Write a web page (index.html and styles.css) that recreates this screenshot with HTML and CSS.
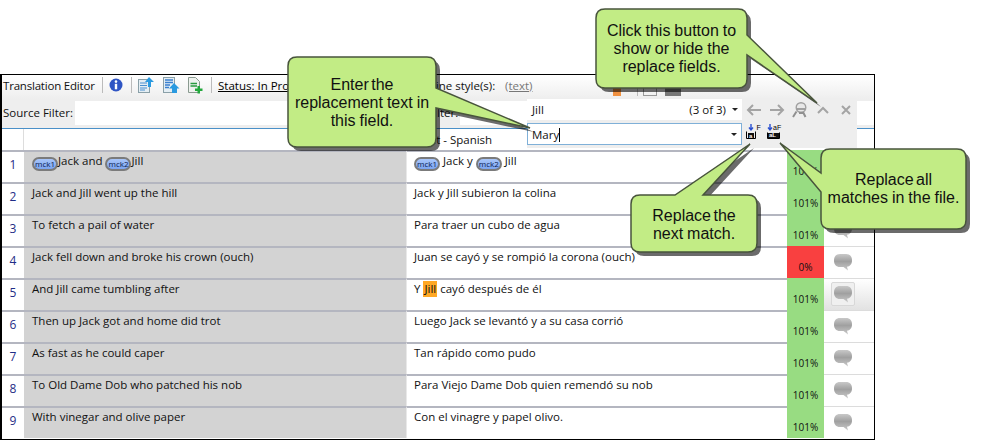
FILE: index.html
```html
<!DOCTYPE html>
<html lang="en">
<head>
  <meta charset="UTF-8" />
  <title>Translation Editor</title>
  <link rel="stylesheet" href="styles.css">
</head>
<body>

<svg class="defs" width="0" height="0" aria-hidden="true">
  <defs>
    <linearGradient id="bubbleFill" x1="0" y1="0" x2="0" y2="1">
      <stop offset="0" stop-color="#c8c8c8"/>
      <stop offset="0.45" stop-color="#a0a0a0"/>
      <stop offset="1" stop-color="#cacaca"/>
    </linearGradient>
    <symbol id="bubble" viewBox="0 0 18 17">
      <path d="M6 0H12C16 0 18 2.500 18 6.500C18 10 16 12.500 13 12.800L14 16.500L9.500 13H6C2 13 0 10.500 0 6.500C0 2.500 2 0 6 0Z" fill="url(#bubbleFill)"/>
    </symbol>
    <path id="c1" d="M297 57H427Q436 57 436 66V88L530 128L436 108V138Q436 147 427 147H297Q288 147 288 138V66Q288 57 297 57Z"/>
    <path id="c2" d="M605 9H738Q747 9 747 18V35L817 103L747 55V79Q747 88 738 88H605Q596 88 596 79V18Q596 9 605 9Z"/>
    <path id="c3" d="M640 195H675L750 144L703 195H748Q757 195 757 204V243Q757 252 748 252H640Q631 252 631 243V204Q631 195 640 195Z"/>
    <path id="c4" d="M830 149H957Q966 149 966 158V220Q966 229 957 229H830Q821 229 821 220V192L780 143L821 173V158Q821 149 830 149Z"/>
  </defs>
</svg>

<div class="window">
  <div class="toolbar">
    <span class="title">Translation Editor</span>
    <span class="sep"></span>
    <svg class="tool-info" width="14" height="14" viewBox="0 0 14 14">
      <circle cx="7" cy="7" r="6.500" fill="#2f55c4"/>
      <circle cx="7" cy="3.600" r="1.300" fill="#fff"/>
      <rect x="5.800" y="5.800" width="2.400" height="5.500" fill="#fff"/>
    </svg>
    <span class="sep"></span>
    <svg class="tool-icon" width="17" height="17" viewBox="0 0 17 17">
      <rect x="0.500" y="2.500" width="11" height="13" fill="#e4eef4" stroke="#8aa0a8"/>
      <path d="M2 6H9M2 8.500H9M2 11H9M2 13H7" stroke="#4a90d0"/>
      <path d="M11 0L16 5H13V10H10V5H7Z" fill="#2a9ae0"/>
    </svg>
    <svg class="tool-icon" width="17" height="17" viewBox="0 0 17 17">
      <rect x="0.500" y="0.500" width="11" height="15" fill="#e4eef4" stroke="#8aa0a8"/>
      <path d="M2 3H10M2 5.500H10M2 8H7M2 10.500H6" stroke="#3a80d0" stroke-width="1.500"/>
      <path d="M11 6L16.500 11.500H14V16H9V11.500H6Z" fill="#2a9ae0"/>
    </svg>
    <svg class="tool-icon" width="15" height="17" viewBox="0 0 15 17">
      <path d="M0.500 0.500H7.500L11.500 4.500V15.500H0.500Z" fill="#eef2ee" stroke="#8a9a90"/>
      <path d="M2.500 6.500H9M2.500 9H9" stroke="#2a9a40" stroke-width="1.500"/>
      <path d="M9.500 9H12V11.500H14.500V14H12V16.500H9.500V14H7V11.500H9.500Z" fill="#22a83c"/>
    </svg>
    <span class="sep"></span>
    <a class="status">Status: In Progress</a>
    <span class="style-label">Apply inline style(s):</span>
    <a class="style-link">(text)</a>
    <span class="hidden-tools">
      <i class="stub-orange"></i>
      <i class="stub-line"></i>
      <i class="stub-box"></i>
      <i class="stub-dark"></i>
    </span>
  </div>

  <div class="filters">
    <label class="filter-label">Source Filter:</label>
    <div class="filter-input source-input"></div>
    <label class="filter-label">Target Filter:</label>
    <div class="filter-input target-input"></div>
  </div>

  <div class="head">
    <div class="cell-num"></div>
    <div class="cell-source"></div>
    <div class="cell-target">Target - Spanish</div>
    <div class="head-rest"></div>
  </div>

  <div class="row">
    <div class="cell-num">1</div>
    <div class="cell-source"><span class="tag">mck1</span>Jack and <span class="tag">mck2</span>Jill</div>
    <div class="cell-target"><span class="tag">mck1</span> Jack y <span class="tag">mck2</span> Jill</div>
    <div class="cell-match">101%</div>
    <div class="cell-note"><svg class="bubble" width="18" height="17"><use href="#bubble"/></svg></div>
  </div>
  <div class="row">
    <div class="cell-num">2</div>
    <div class="cell-source">Jack and Jill went up the hill</div>
    <div class="cell-target">Jack y Jill subieron la colina</div>
    <div class="cell-match">101%</div>
    <div class="cell-note"><svg class="bubble" width="18" height="17"><use href="#bubble"/></svg></div>
  </div>
  <div class="row">
    <div class="cell-num">3</div>
    <div class="cell-source">To fetch a pail of water</div>
    <div class="cell-target">Para traer un cubo de agua</div>
    <div class="cell-match">101%</div>
    <div class="cell-note"><svg class="bubble" width="18" height="17"><use href="#bubble"/></svg></div>
  </div>
  <div class="row">
    <div class="cell-num">4</div>
    <div class="cell-source">Jack fell down and broke his crown (ouch)</div>
    <div class="cell-target">Juan se cayó y se rompió la corona (ouch)</div>
    <div class="cell-match no-match">0%</div>
    <div class="cell-note"><svg class="bubble" width="18" height="17"><use href="#bubble"/></svg></div>
  </div>
  <div class="row current">
    <div class="cell-num">5</div>
    <div class="cell-source">And Jill came tumbling after</div>
    <div class="cell-target">Y <mark>Jill</mark> cayó después de él</div>
    <div class="cell-match">101%</div>
    <div class="cell-note"><span class="note-button"><svg class="bubble" width="18" height="17"><use href="#bubble"/></svg></span></div>
  </div>
  <div class="row">
    <div class="cell-num">6</div>
    <div class="cell-source">Then up Jack got and home did trot</div>
    <div class="cell-target">Luego Jack se levantó y a su casa corrió</div>
    <div class="cell-match">101%</div>
    <div class="cell-note"><svg class="bubble" width="18" height="17"><use href="#bubble"/></svg></div>
  </div>
  <div class="row">
    <div class="cell-num">7</div>
    <div class="cell-source">As fast as he could caper</div>
    <div class="cell-target">Tan rápido como pudo</div>
    <div class="cell-match">101%</div>
    <div class="cell-note"><svg class="bubble" width="18" height="17"><use href="#bubble"/></svg></div>
  </div>
  <div class="row">
    <div class="cell-num">8</div>
    <div class="cell-source">To Old Dame Dob who patched his nob</div>
    <div class="cell-target">Para Viejo Dame Dob quien remendó su nob</div>
    <div class="cell-match">101%</div>
    <div class="cell-note"><svg class="bubble" width="18" height="17"><use href="#bubble"/></svg></div>
  </div>
  <div class="row">
    <div class="cell-num">9</div>
    <div class="cell-source">With vinegar and olive paper</div>
    <div class="cell-target">Con el vinagre y papel olivo.</div>
    <div class="cell-match">101%</div>
    <div class="cell-note"><svg class="bubble" width="18" height="17"><use href="#bubble"/></svg></div>
  </div>
</div>

<!-- find and replace panel floats over the toolbar -->
<div class="find-panel">
  <div class="find-line">
    <div class="find-field">
      <span class="find-text">Jill</span>
      <span class="find-count">(3 of 3)</span>
      <span class="caret"></span>
    </div>
    <div class="find-buttons">
      <svg width="16" height="14" viewBox="0 0 16 14"><path d="M15 7H2M7 2L2 7L7 12" class="nav-stroke"/></svg>
      <svg width="16" height="14" viewBox="0 0 16 14"><path d="M1 7H14M9 2L14 7L9 12" class="nav-stroke"/></svg>
      <svg width="16" height="16" viewBox="0 0 16 16">
        <circle cx="9" cy="5.500" r="4.800" fill="#e8e8e8" stroke="#a0a0a0" stroke-width="1.400"/>
        <path d="M5 7H13" stroke="#8a8a8a" stroke-width="1.500"/>
        <path d="M4.500 9.500L1 15M7 11H11.500L13.500 15" fill="none" stroke="#909090" stroke-width="2"/>
      </svg>
      <svg width="14" height="10" viewBox="0 0 14 10"><path d="M2 8L7 3L12 8" class="nav-stroke"/></svg>
      <svg width="12" height="12" viewBox="0 0 12 12"><path d="M2 2L10 10M10 2L2 10" class="nav-stroke"/></svg>
    </div>
  </div>
  <div class="find-line">
    <div class="find-field active">
      <span class="find-text">Mary<i class="cursor"></i></span>
      <span class="caret"></span>
    </div>
    <div class="replace-buttons">
      <svg width="15" height="15" viewBox="0 0 15 15">
        <path d="M5 0V5M3 3.500L5 6L7 3.500" fill="none" stroke="#2a50d0" stroke-width="1.400"/>
        <text x="10.500" y="6" class="ico-text">F</text>
        <path d="M0.500 7.500V14.500H9.500V7.500" fill="none" stroke="#000"/>
        <rect x="2" y="9" width="6" height="5" fill="#111"/>
        <text x="3" y="13.500" class="ico-inv">a</text>
      </svg>
      <svg width="15" height="15" viewBox="0 0 15 15">
        <path d="M3 0V5M1 3.500L3 6L5 3.500" fill="none" stroke="#2a50d0" stroke-width="1.400"/>
        <text x="6" y="6" class="ico-text">aF</text>
        <path d="M0.500 8.500V14.500H12.500V8.500" fill="none" stroke="#000"/>
        <rect x="1" y="9" width="11" height="5" fill="#111"/>
        <text x="2" y="13.200" class="ico-inv">aL</text>
      </svg>
    </div>
  </div>
</div>

<!-- callouts -->
<svg class="callout-shapes" width="981" height="440" aria-hidden="true">
  <use href="#c1" class="shape-shadow"/><use href="#c1" class="shape"/>
  <use href="#c2" class="shape-shadow"/><use href="#c2" class="shape"/>
  <use href="#c3" class="shape-shadow"/><use href="#c3" class="shape"/>
  <use href="#c4" class="shape-shadow"/><use href="#c4" class="shape"/>
</svg>
<div class="callout callout-enter"><span class="tight">Enter the</span><br>replacement text in<br>this field.</div>
<div class="callout callout-click">Click this button to<br>show or hide the<br>replace fields.</div>
<div class="callout callout-next"><span class="tight">Replace the</span><br>next match.</div>
<div class="callout callout-all"><span class="tight">Replace all</span><br>matches in the file.</div>

</body>
</html>
```

FILE: styles.css
```css
body {
  margin: 0;
  background: #fff;
  font-family: 'Open Sans', 'Noto Sans', sans-serif;
  font-size: 11.5px;
  color: #111;
  width: 981px;
  height: 440px;
  overflow: hidden;
  position: relative;
}
.defs {
  position: absolute;
}
.window {
  margin-top: 74px;
  width: 875px;
  height: 366px;
  box-sizing: border-box;
  border: 1px solid #000;
  border-left-width: 2px;
  overflow: hidden;
}

/* toolbar */
.toolbar {
  display: flex;
  align-items: center;
  height: 20px;
  padding: 0 0 4px 1px;
  background: linear-gradient(#fff, #eee);
}
.title {
  width: 99px;
  white-space: nowrap;
  letter-spacing: -0.2px;
}
.sep {
  width: 1px;
  height: 16px;
  background: #bbb;
}
.tool-info {
  margin: 0 8px 0 6px;
}
.tool-icon {
  margin-left: 6px;
  margin-right: 2px;
}
.tool-icon + .sep {
  margin-left: 6px;
}
.status {
  margin-left: 6px;
  color: #000;
  text-decoration: underline;
  width: 172px;
  white-space: nowrap;
}
.style-label {
  white-space: nowrap;
  width: 115px;
}
.style-link {
  color: #777;
  text-decoration: underline;
  width: 108px;
}
.hidden-tools {
  display: flex;
  align-items: center;
  height: 15px;
  margin-top: 7px;
}
.hidden-tools i {
  display: block;
  height: 15px;
}
.stub-orange { width: 8px; background: #f09040; }
.stub-line { width: 1px; background: #bbb; margin-left: 16px; }
.stub-box { width: 12px; border: 1px solid #999; margin-left: 5px; box-sizing: content-box; height: 13px !important; }
.stub-dark { width: 16px; background: #777; margin-left: 8px; }

/* filters */
.filters {
  display: flex;
  align-items: center;
  height: 27px;
  padding: 0 0 2px 1px;
  background: #eee;
  border-bottom: 1px solid #4a90c8;
}
.filter-label {
  white-space: nowrap;
}
.filter-input {
  height: 24px;
  background: #fff;
}
.source-input {
  width: 316px;
  margin-left: 2px;
}
.target-input {
  flex: 1;
  margin-left: 2px;
}

/* grid */
.head, .row {
  display: flex;
}
.head {
  height: 21px;
  background: #fff;
}
.head .cell-num, .head .cell-source {
  border: 0;
  background: #fff;
}
.head .cell-num {
  border-right: 1px solid #ddd;
  height: 21px;
  padding: 0;
}
.head .cell-target {
  border: 0;
  padding: 1px 0 0 0;
  line-height: 20px;
  white-space: nowrap;
}
.head-rest {
  flex: 1;
}
.row {
  height: 32px;
}
.cell-num, .cell-source, .cell-target, .cell-match, .cell-note {
  box-sizing: border-box;
  height: 32px;
  border-top: 2px solid #b4b6c0;
  white-space: nowrap;
}
.cell-num {
  width: 22px;
  padding-top: 4px;
  line-height: 18px;
  text-align: center;
  color: #1f2d86;
  font-size: 12px;
}
.cell-source {
  width: 382px;
  padding-left: 8px;
  line-height: 18px;
  background: #d3d3d3;
}
.cell-target {
  width: 381px;
  padding-left: 7px;
  line-height: 18px;
  background: #fff;
  border-left: 1px solid #e8e8e8;
}
.cell-match {
  width: 37px;
  line-height: 16px;
  font-size: 10px;
  text-align: center;
  background: #98dc82;
  border-top: 0;
  padding-top: 13px;
}
.no-match {
  background: #f94040;
}
.cell-note {
  flex: 1;
  display: flex;
  padding: 7px 0 0 10px;
  border-top-color: #dcdcdc;
  border-top-width: 1px;
}
.bubble {
  display: block;
}
.current .cell-note {
  background: linear-gradient(#fff, #e2e2e2);
  padding: 3px 0 0 7px;
}
.note-button {
  display: block;
  box-sizing: border-box;
  width: 24px;
  height: 24px;
  padding: 3px 2px;
  border: 1px solid #d8d8d8;
  border-radius: 2px;
  background: #f0f0f0;
}
.tag {
  display: inline-block;
  box-sizing: border-box;
  width: 26px;
  height: 14px;
  border: 2px solid #7b7b7b;
  border-radius: 7px;
  background: linear-gradient(#a8c6fa, #7ba4f0);
  font-size: 8px;
  line-height: 10px;
  text-align: center;
  color: #0a1a50;
  vertical-align: -2px;
}
mark {
  background: #ffa824;
  color: inherit;
  padding: 0 1px 1px;
}

/* find panel */
.find-panel {
  position: absolute;
  left: 527px;
  top: 98px;
  width: 330px;
  height: 50px;
  padding-top: 1px;
  box-sizing: border-box;
  background: #eee;
  display: flex;
  flex-direction: column;
  gap: 3px;
}
.find-line {
  display: flex;
  align-items: center;
}
.find-field {
  display: flex;
  align-items: center;
  box-sizing: border-box;
  width: 215px;
  height: 21px;
  padding: 0 4px 0 5px;
  background: #fff;
}
.find-field.active {
  height: 22px;
  border: 1px solid #7fb0d8;
  padding-left: 4px;
}
.find-text {
  flex: 1;
}
.cursor {
  display: inline-block;
  width: 1px;
  height: 14px;
  background: #000;
  vertical-align: -3px;
}
.find-count {
  margin-right: 6px;
}
.caret {
  width: 0;
  height: 0;
  border: 3px solid transparent;
  border-top: 3px solid #222;
  border-bottom: 0;
}
.find-buttons {
  display: flex;
  align-items: center;
  margin-left: 4px;
  gap: 7px;
}
.find-buttons svg:nth-child(4) {
  margin-left: 1px;
}
.find-buttons svg:nth-child(5) {
  margin-left: 3px;
}
.nav-stroke {
  fill: none;
  stroke: #a4a4a4;
  stroke-width: 2;
}
.replace-buttons {
  display: flex;
  gap: 6px;
  margin-left: 4px;
  margin-top: -5px;
}
.ico-text {
  font-family: 'Liberation Sans', sans-serif;
  font-size: 7px;
  fill: #000;
}
.ico-inv {
  font-family: 'Liberation Sans', sans-serif;
  font-size: 6px;
  font-weight: bold;
  fill: #fff;
}

/* callouts */
.callout-shapes {
  position: absolute;
  left: 0;
  top: 0;
}
.shape {
  fill: #c2ec85;
  stroke: #48543c;
  stroke-width: 1.500;
}
.shape-shadow {
  fill: rgba(0, 0, 0, 0.58);
  transform: translate(4px, 4px);
}
.callout {
  position: absolute;
  display: block;
  box-sizing: border-box;
  text-align: center;
  font-family: 'Liberation Sans', sans-serif;
  font-size: 16px;
  line-height: 18px;
  word-spacing: -0.5px;
  color: #111;
}
.tight {
  word-spacing: -2px;
}
.callout-enter { left: 288px; top: 76px; width: 148px; }
.callout-click { left: 596px; top: 22px; width: 151px; }
.callout-next { left: 631px; top: 207px; width: 126px; }
.callout-all { left: 821px; top: 171px; width: 145px; }
```
